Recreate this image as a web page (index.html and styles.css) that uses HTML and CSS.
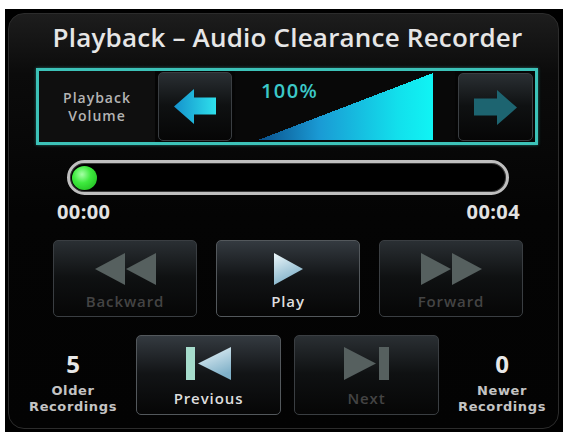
FILE: index.html
```html
<!DOCTYPE html>
<html lang="en">
<head>
    <meta charset="UTF-8">
    <title>Playback - Audio Clearance Recorder</title>
    <link rel="stylesheet" href="styles.css">
</head>
<body>

    <div class="screen">
        <div class="panel">
            <h1 class="title">Playback – Audio Clearance Recorder</h1>

            <div class="volume">
                <div class="volume-label">
                    <div>Playback</div>
                    <div>Volume</div>
                </div>
                <div class="btn arrow-btn">
                    <svg width="42" height="35" viewBox="0 0 42 35">
                        <defs>
                            <linearGradient id="arrowOn" x1="0" y1="0" x2="1" y2="0">
                                <stop offset="0" stop-color="#1592cc"/>
                                <stop offset="1" stop-color="#2ee0ec"/>
                            </linearGradient>
                        </defs>
                        <polygon points="0,17.5 20,0 20,8.5 42,8.5 42,25.5 20,25.5 20,35" fill="url(#arrowOn)"/>
                    </svg>
                </div>
                <div class="volume-track">
                    <span class="volume-value">100%</span>
                </div>
                <div class="btn arrow-btn">
                    <svg width="43" height="35" viewBox="0 0 43 35">
                        <polygon points="43,17.5 23,0 23,8.5 0,8.5 0,25.5 23,25.5 23,35" fill="#1d6470"/>
                    </svg>
                </div>
            </div>

            <div class="progress">
                <div class="progress-dot"></div>
            </div>
            <div class="times">
                <span>00:00</span>
                <span>00:04</span>
            </div>

            <div class="controls">
                <div class="btn ctrl off">
                    <svg width="61" height="32" viewBox="0 0 61 32">
                        <polygon points="0,16 30,0 30,32" fill="#56605f"/>
                        <polygon points="31,16 61,0 61,32" fill="#56605f"/>
                    </svg>
                    <span class="ctrl-label">Backward</span>
                </div>
                <div class="btn ctrl on">
                    <svg width="29" height="32" viewBox="0 0 29 32">
                        <defs>
                            <linearGradient id="iconOn" x1="0" y1="0" x2="0.4" y2="1">
                                <stop offset="0" stop-color="#eef8fb"/>
                                <stop offset="1" stop-color="#7fb0c8"/>
                            </linearGradient>
                        </defs>
                        <polygon points="0,0 29,16 0,32" fill="url(#iconOn)"/>
                    </svg>
                    <span class="ctrl-label">Play</span>
                </div>
                <div class="btn ctrl off">
                    <svg width="61" height="32" viewBox="0 0 61 32">
                        <polygon points="0,0 30,16 0,32" fill="#56605f"/>
                        <polygon points="31,0 61,16 31,32" fill="#56605f"/>
                    </svg>
                    <span class="ctrl-label">Forward</span>
                </div>
            </div>

            <div class="recordings">
                <div class="count">
                    <div class="count-num">5</div>
                    <div class="count-line first">Older</div>
                    <div class="count-line">Recordings</div>
                </div>
                <div class="btn ctrl track-btn on">
                    <svg width="45" height="33" viewBox="0 0 45 33">
                        <rect x="0" y="0" width="9" height="33" fill="#a6dccc"/>
                        <polygon points="12,16.5 45,0 45,33" fill="url(#iconOn)"/>
                    </svg>
                    <span class="ctrl-label">Previous</span>
                </div>
                <div class="btn ctrl track-btn off">
                    <svg width="45" height="33" viewBox="0 0 45 33">
                        <polygon points="0,0 32,16.5 0,33" fill="#56605f"/>
                        <rect x="35" y="0" width="10" height="33" fill="#56605f"/>
                    </svg>
                    <span class="ctrl-label">Next</span>
                </div>
                <div class="count">
                    <div class="count-num">0</div>
                    <div class="count-line first">Newer</div>
                    <div class="count-line">Recordings</div>
                </div>
            </div>
        </div>
    </div>

</body>
</html>
```

FILE: styles.css
```css
body {
    margin: 0;
    background-color: #fff;
    font-family: 'Open Sans', 'DejaVu Sans', sans-serif;
}
.screen {
    margin: 9px 0 0 5px;
    width: 558px;
    height: 423px;
    padding: 4px 0 0 3px;
    box-sizing: border-box;
    background: #000;
}
.panel {
    width: 551px;
    height: 416px;
    box-sizing: border-box;
    border: 1px solid #2c2c2c;
    border-radius: 16px;
    background: linear-gradient(#1d1d1d, #0b0b0b 60px, #040404 200px, #030303);
}
.title {
    margin: 6px 0 0 0;
    padding-left: 8px;
    font-size: 26px;
    line-height: 34px;
    font-weight: 600;
    letter-spacing: 0.2px;
    color: #e6e6e6;
    text-align: center;
}

/* volume strip */
.volume {
    display: flex;
    gap: 3px;
    width: 502px;
    height: 77px;
    margin: 14px 0 0 27px;
    padding-right: 2px;
    box-sizing: border-box;
    border: 3px solid #3cc2b8;
    box-shadow: 0 0 3px rgba(60, 200, 190, 0.5);
    background: #050505;
}
.volume-label {
    width: 116px;
    display: flex;
    flex-direction: column;
    align-items: center;
    justify-content: center;
    font-size: 14px;
    line-height: 18px;
    font-weight: 600;
    letter-spacing: 1px;
    color: #b4b4b4;
    background: #0f0f0f;
}
.btn {
    box-sizing: border-box;
    border: 1px solid #3a3e42;
    border-radius: 5px;
    background: linear-gradient(#2a2f33, #0f1112 48%, #060606);
}
.arrow-btn {
    width: 74px;
    margin: 1px 0;
    display: flex;
    align-items: center;
    justify-content: center;
}
.arrow-btn:last-child {
    width: 75px;
    margin-top: 2px;
}
.volume-track {
    width: 220px;
    padding: 10px 0 0 26px;
    box-sizing: border-box;
    background:
        linear-gradient(to bottom right, #080808 50%, transparent 50%) 23px 2px / 175px 67px no-repeat,
        linear-gradient(to right, #0a4f8a, #1a9ad4 35%, #12e0ec 80%, #10f4f4) 23px 2px / 175px 67px no-repeat,
        #080808;
}
.volume-value {
    display: block;
    font-size: 20px;
    line-height: 20px;
    font-weight: 600;
    letter-spacing: 1.4px;
    color: #3cc8c8;
}

/* progress */
.progress {
    display: flex;
    align-items: center;
    width: 442px;
    height: 35px;
    margin: 15px 0 0 58px;
    padding-left: 2px;
    box-sizing: border-box;
    border: 3px solid #bfbfbf;
    border-radius: 18px;
    box-shadow: inset 0 0 0 1px #3a3a3a;
    background: #000;
}
.progress-dot {
    width: 25px;
    height: 24px;
    border-radius: 50%;
    background: radial-gradient(circle at 40% 35%, #a6ffa6 0, #3eea3e 40%, #19b019 100%);
}
.times {
    display: flex;
    justify-content: space-between;
    width: 463px;
    margin: 7px 0 0 48px;
    font-size: 20px;
    line-height: 20px;
    font-weight: 700;
    letter-spacing: 0.4px;
    color: #e2e2e2;
}

/* transport buttons */
.controls {
    display: grid;
    grid-template-columns: repeat(3, 144px);
    gap: 19px;
    margin: 18px 0 0 44px;
}
.ctrl {
    height: 77px;
    padding-top: 12px;
    display: flex;
    flex-direction: column;
    align-items: center;
}
.ctrl-label {
    margin-top: 7px;
    font-size: 15px;
    line-height: 18px;
    font-weight: 600;
    letter-spacing: 0.9px;
}
.on {
    border-color: #53585c;
    background: linear-gradient(#343a40, #121416 48%, #060606);
}
.on .ctrl-label {
    color: #dedede;
}
.off .ctrl-label {
    color: #444;
}
.recordings {
    display: flex;
    gap: 13px;
    margin: 18px 0 0 14px;
}
.track-btn {
    width: 145px;
    height: 80px;
    padding-top: 11px;
}
.track-btn .ctrl-label {
    margin-top: 9px;
}
.count {
    width: 100px;
    padding-top: 17px;
    text-align: center;
    color: #c4c4c4;
}
.count-num {
    font-size: 24px;
    line-height: 24px;
    font-weight: 700;
    color: #e8e8e8;
}
.count-line {
    font-family: 'DejaVu Sans', sans-serif;
    font-size: 13px;
    line-height: 15.5px;
    font-weight: 700;
    letter-spacing: 0.6px;
}
.count-line.first {
    margin-top: 7px;
}
```
